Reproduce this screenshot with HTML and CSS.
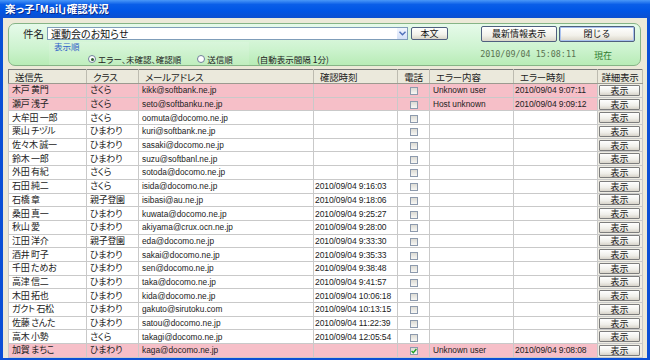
FILE: index.html
```html
<!DOCTYPE html>
<html lang="ja">
<head>
    <meta charset="UTF-8">
    <title>楽っ子「Mail」確認状況</title>
    <link rel="stylesheet" href="styles.css">
</head>
<body>
    <div class="window">
        <div class="titlebar">楽っ子「Mail」確認状況</div>
        <div class="content">
            <div class="panel">
                <div class="panel-top">
                    <span class="subject-label">件名</span>
                    <div class="combo">
                        <span class="combo-text">運動会のお知らせ</span>
                        <span class="combo-arrow">
                            <svg width="7" height="5" viewBox="0 0 7 5"><path d="M0.5 0.8 L3.5 3.8 L6.5 0.8" fill="none" stroke="#4d6fb8" stroke-width="1.4"/></svg>
                        </span>
                    </div>
                    <button class="btn btn-body">本文</button>
                    <button class="btn btn-big btn-refresh">最新情報表示</button>
                    <button class="btn btn-big btn-close">閉じる</button>
                </div>
                <div class="panel-bottom">
                    <div class="order">
                        <span class="order-label">表示順</span>
                        <div class="radios">
                            <span class="radio checked"></span><span class="radio-text">エラー、未確認、確認順</span>
                            <span class="radio"></span><span class="radio-text">送信順</span>
                        </div>
                    </div>
                    <span class="interval">(自動表示間隔 1分)</span>
                    <span class="clock">2010/09/04 15:08:11</span>
                    <span class="now">現在</span>
                </div>
            </div>

            <table class="grid">
                <colgroup>
                    <col style="width:78px">
                    <col style="width:52px">
                    <col style="width:175px">
                    <col style="width:84px">
                    <col style="width:32px">
                    <col style="width:84px">
                    <col style="width:84px">
                    <col style="width:45px">
                </colgroup>
                <thead>
                    <tr>
                        <th>送信先</th>
                        <th>クラス</th>
                        <th>メールアドレス</th>
                        <th>確認時刻</th>
                        <th class="center">電話</th>
                        <th>エラー内容</th>
                        <th>エラー時刻</th>
                        <th class="center">詳細表示</th>
                    </tr>
                </thead>
                <tbody>
                    <tr class="error">
                        <td>木戸 黄門</td><td>さくら</td><td class="mail">kikk@softbank.ne.jp</td><td class="time"></td>
                        <td class="tel"><span class="check"></span></td><td class="mail">Unknown user</td><td class="time">2010/09/04 9:07:11</td>
                        <td class="detail"><button class="show">表示</button></td>
                    </tr>
                    <tr class="error">
                        <td>瀬戸 浅子</td><td>さくら</td><td class="mail">seto@softbanku.ne.jp</td><td class="time"></td>
                        <td class="tel"><span class="check"></span></td><td class="mail">Host unknown</td><td class="time">2010/09/04 9:09:12</td>
                        <td class="detail"><button class="show">表示</button></td>
                    </tr>
                    <tr>
                        <td>大牟田 一郎</td><td>さくら</td><td class="mail">oomuta@docomo.ne.jp</td><td class="time"></td>
                        <td class="tel"><span class="check"></span></td><td></td><td></td>
                        <td class="detail"><button class="show">表示</button></td>
                    </tr>
                    <tr>
                        <td>栗山 チヅル</td><td>ひまわり</td><td class="mail">kuri@softbank.ne.jp</td><td class="time"></td>
                        <td class="tel"><span class="check"></span></td><td></td><td></td>
                        <td class="detail"><button class="show">表示</button></td>
                    </tr>
                    <tr>
                        <td>佐々木 誠一</td><td>ひまわり</td><td class="mail">sasaki@docomo.ne.jp</td><td class="time"></td>
                        <td class="tel"><span class="check"></span></td><td></td><td></td>
                        <td class="detail"><button class="show">表示</button></td>
                    </tr>
                    <tr>
                        <td>鈴木 一郎</td><td>ひまわり</td><td class="mail">suzu@softbanl.ne.jp</td><td class="time"></td>
                        <td class="tel"><span class="check"></span></td><td></td><td></td>
                        <td class="detail"><button class="show">表示</button></td>
                    </tr>
                    <tr>
                        <td>外田 有紀</td><td>さくら</td><td class="mail">sotoda@docomo.ne.jp</td><td class="time"></td>
                        <td class="tel"><span class="check"></span></td><td></td><td></td>
                        <td class="detail"><button class="show">表示</button></td>
                    </tr>
                    <tr>
                        <td>石田 純二</td><td>さくら</td><td class="mail">isida@docomo.ne.jp</td><td class="time">2010/09/04 9:16:03</td>
                        <td class="tel"><span class="check"></span></td><td></td><td></td>
                        <td class="detail"><button class="show">表示</button></td>
                    </tr>
                    <tr>
                        <td>石橋 章</td><td>親子登園</td><td class="mail">isibasi@au.ne.jp</td><td class="time">2010/09/04 9:18:06</td>
                        <td class="tel"><span class="check"></span></td><td></td><td></td>
                        <td class="detail"><button class="show">表示</button></td>
                    </tr>
                    <tr>
                        <td>桑田 真一</td><td>ひまわり</td><td class="mail">kuwata@docomo.ne.jp</td><td class="time">2010/09/04 9:25:27</td>
                        <td class="tel"><span class="check"></span></td><td></td><td></td>
                        <td class="detail"><button class="show">表示</button></td>
                    </tr>
                    <tr>
                        <td>秋山 愛</td><td>ひまわり</td><td class="mail">akiyama@crux.ocn.ne.jp</td><td class="time">2010/09/04 9:28:00</td>
                        <td class="tel"><span class="check"></span></td><td></td><td></td>
                        <td class="detail"><button class="show">表示</button></td>
                    </tr>
                    <tr>
                        <td>江田 洋介</td><td>親子登園</td><td class="mail">eda@docomo.ne.jp</td><td class="time">2010/09/04 9:33:30</td>
                        <td class="tel"><span class="check"></span></td><td></td><td></td>
                        <td class="detail"><button class="show">表示</button></td>
                    </tr>
                    <tr>
                        <td>酒井 町子</td><td>ひまわり</td><td class="mail">sakai@docomo.ne.jp</td><td class="time">2010/09/04 9:35:33</td>
                        <td class="tel"><span class="check"></span></td><td></td><td></td>
                        <td class="detail"><button class="show">表示</button></td>
                    </tr>
                    <tr>
                        <td>千田 ためお</td><td>ひまわり</td><td class="mail">sen@docomo.ne.jp</td><td class="time">2010/09/04 9:38:48</td>
                        <td class="tel"><span class="check"></span></td><td></td><td></td>
                        <td class="detail"><button class="show">表示</button></td>
                    </tr>
                    <tr>
                        <td>高津 信二</td><td>ひまわり</td><td class="mail">taka@docomo.ne.jp</td><td class="time">2010/09/04 9:41:57</td>
                        <td class="tel"><span class="check"></span></td><td></td><td></td>
                        <td class="detail"><button class="show">表示</button></td>
                    </tr>
                    <tr>
                        <td>木田 拓也</td><td>ひまわり</td><td class="mail">kida@docomo.ne.jp</td><td class="time">2010/09/04 10:06:18</td>
                        <td class="tel"><span class="check"></span></td><td></td><td></td>
                        <td class="detail"><button class="show">表示</button></td>
                    </tr>
                    <tr>
                        <td>ガクト 石松</td><td>ひまわり</td><td class="mail">gakuto@sirutoku.com</td><td class="time">2010/09/04 10:13:15</td>
                        <td class="tel"><span class="check"></span></td><td></td><td></td>
                        <td class="detail"><button class="show">表示</button></td>
                    </tr>
                    <tr>
                        <td>佐藤 さんた</td><td>ひまわり</td><td class="mail">satou@docomo.ne.jp</td><td class="time">2010/09/04 11:22:39</td>
                        <td class="tel"><span class="check"></span></td><td></td><td></td>
                        <td class="detail"><button class="show">表示</button></td>
                    </tr>
                    <tr>
                        <td>高木 小勢</td><td>さくら</td><td class="mail">takagi@docomo.ne.jp</td><td class="time">2010/09/04 12:05:54</td>
                        <td class="tel"><span class="check"></span></td><td></td><td></td>
                        <td class="detail"><button class="show">表示</button></td>
                    </tr>
                    <tr class="error">
                        <td>加賀 まちこ</td><td>ひまわり</td><td class="mail">kaga@docomo.ne.jp</td><td class="time"></td>
                        <td class="tel"><span class="check checked"><svg width="6" height="6" viewBox="0 0 6 6"><path d="M0.6 3 L2.3 4.7 L5.4 1" fill="none" stroke="#21a121" stroke-width="1.4"/></svg></span></td>
                        <td class="mail">Unknown user</td><td class="time">2010/09/04 9:08:08</td>
                        <td class="detail"><button class="show">表示</button></td>
                    </tr>
                </tbody>
            </table>
        </div>
    </div>
</body>
</html>
```

FILE: styles.css
```css
body {
    margin: 0;
    padding: 0;
    font-family: "Noto Sans CJK JP", "Noto Sans", sans-serif;
    font-feature-settings: "palt";
}

.window {
    width: 650px;
    height: 360px;
    box-sizing: border-box;
    display: flex;
    flex-direction: column;
    background-color: #0a4fd6;
}

.titlebar {
    height: 18px;
    padding-left: 5px;
    line-height: 18px;
    font-size: 10.5px;
    font-weight: bold;
    color: #fff;
    text-shadow: 1px 1px 0 #0b2a8a;
    background: linear-gradient(#4a98f8, #0a5ee8 25%, #0055e5 60%, #0b4fd0);
}

.content {
    flex: 1;
    margin: 0 3px 3px 3px;
    padding: 5px 5px 0 5px;
    background-color: #ece9d8;
    display: flex;
    flex-direction: column;
    gap: 3px;
}

/* upper green panel */
.panel {
    height: 43px;
    box-sizing: border-box;
    margin-right: 1px;
    padding: 1px 5px 0 14px;
    border: 1px solid #86b486;
    border-radius: 7px;
    background: linear-gradient(#e6faea, #cdf3cf 60%, #b8ecb6);
    display: flex;
    flex-direction: column;
}

.panel-top {
    height: 17px;
    display: flex;
    align-items: center;
}

.subject-label {
    width: 24px;
    font-size: 10.5px;
    color: #222;
}

.combo {
    width: 361px;
    height: 13px;
    box-sizing: border-box;
    border: 1px solid #7f9db9;
    background-color: #fff;
    display: flex;
    align-items: center;
}

.combo-text {
    flex: 1;
    padding-left: 3px;
    font-size: 10px;
    line-height: 11px;
    color: #111;
}

.combo-arrow {
    width: 10px;
    height: 11px;
    display: flex;
    align-items: center;
    justify-content: center;
    background: linear-gradient(#f2f6fe, #d4e0f7);
}

.btn {
    padding: 0;
    border: 1px solid #4f5f7f;
    border-radius: 2px;
    background: linear-gradient(#ffffff, #f2f1ea 60%, #d9d5c8);
    font-family: inherit;
    font-size: 9px;
    color: #111;
}

.btn-body {
    width: 37px;
    height: 13px;
    margin-left: 3px;
    line-height: 10px;
}

.btn-big {
    width: 76px;
    height: 16px;
    line-height: 12px;
}

.btn-refresh {
    margin-left: auto;
}

.btn-close {
    margin-left: 2px;
    box-shadow: inset 0 0 0 1px #a9c2ef;
}

.panel-bottom {
    flex: 1;
    display: flex;
}

.order {
    width: 200px;
    margin-left: 26px;
    display: flex;
    flex-direction: column;
    background-color: rgba(255, 255, 255, 0.12);
}

.order-label {
    padding-left: 5px;
    font-size: 8.5px;
    line-height: 9px;
    color: #2f62c8;
}

.radios {
    margin-top: 3px;
    padding-left: 39px;
    display: flex;
    align-items: center;
    height: 10px;
}

.radio {
    width: 8px;
    height: 8px;
    box-sizing: border-box;
    border: 1px solid #6f7f99;
    border-radius: 50%;
    background-color: #fff;
    display: flex;
    align-items: center;
    justify-content: center;
}

.radio.checked::after {
    content: "";
    width: 3px;
    height: 3px;
    border-radius: 50%;
    background-color: #2e5a2e;
}

.radio-text {
    margin: 0 16px 0 2px;
    font-size: 8.5px;
    color: #222;
}

.interval {
    margin: 11px 0 0 8px;
    font-size: 8.5px;
    color: #222;
    white-space: nowrap;
}

.clock {
    margin: 7px 0 0 auto;
    font-family: "DejaVu Sans Mono", monospace;
    font-size: 8.4px;
    color: #5a7352;
    white-space: nowrap;
}

.now {
    margin: 7px 23px 0 18px;
    font-size: 9px;
    color: #2f7a2f;
}

/* list */
.grid {
    width: 634px;
    table-layout: fixed;
    border-collapse: collapse;
    background-color: #fff;
    border: 1px solid #7a7a7a;
}

.grid th {
    height: 13px;
    padding: 0 0 0 6px;
    text-align: left;
    font-weight: normal;
    font-size: 9.5px;
    line-height: 12px;
    letter-spacing: -0.2px;
    color: #222;
    background-color: #ebe9dc;
    border-right: 1px solid #bdbbb0;
    border-bottom: 1px solid #9c9a90;
    white-space: nowrap;
}

.grid th.center {
    text-align: center;
    padding: 0;
}

.grid tbody tr {
    height: 13.7px;
}

.grid td {
    padding: 0 3px;
    font-size: 9px;
    line-height: 12px;
    letter-spacing: -0.3px;
    color: #222;
    border: 1px solid #c9c9c9;
    white-space: nowrap;
    overflow: hidden;
}

.grid td.mail {
    font-family: "Liberation Sans", Arial, sans-serif;
    font-size: 8.3px;
    letter-spacing: 0;
}

.grid td.time {
    padding: 0 1px;
    font-family: "Liberation Sans", Arial, sans-serif;
    font-size: 8.5px;
    letter-spacing: -0.1px;
}

.grid td.tel {
    padding: 0;
    text-align: center;
}

.grid tr.error td {
    background-color: #f6bfc8;
}

.grid td.detail,
.grid tr.error td.detail {
    padding: 0 0 0 1px;
    background-color: #efede4;
}

.check {
    width: 8px;
    height: 8px;
    box-sizing: border-box;
    margin: 2px auto 0;
    border: 1px solid #8d9aad;
    background: linear-gradient(#dcdbd4, #f7f7f4);
    display: flex;
    align-items: center;
    justify-content: center;
}

.show {
    display: block;
    width: 41px;
    height: 11px;
    padding: 0;
    border: 1px solid #7d7d7d;
    border-radius: 1px;
    background: linear-gradient(#ffffff, #f0efea 60%, #d8d4ca);
    font-family: inherit;
    font-size: 9px;
    line-height: 9px;
    color: #222;
}
```
